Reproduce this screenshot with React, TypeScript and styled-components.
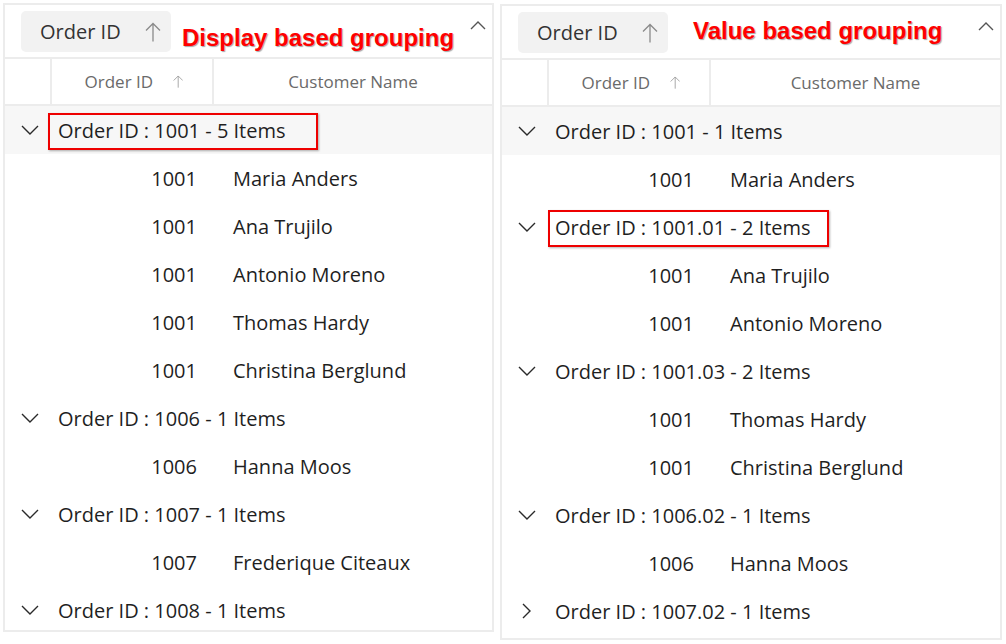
import React from "react";
import styled, { createGlobalStyle } from "styled-components";

const Global = createGlobalStyle`
  html, body { margin: 0; padding: 0; background: #ffffff; }
  body { font-family: "Open Sans", "Noto Sans", sans-serif; }
  * { box-sizing: border-box; }
`;

const Page = styled.div`
  width: 1006px;
  height: 644px;
  display: flex;
  align-items: flex-start;
  padding-left: 3px;
  gap: 6px;
  overflow: hidden;
`;

const Panel = styled.div<{ $w: number; $h: number; $top: number }>`
  width: ${(p) => p.$w}px;
  height: ${(p) => p.$h}px;
  margin-top: ${(p) => p.$top}px;
  border: 2px solid #ececec;
  display: flex;
  flex-direction: column;
  overflow: hidden;
  background: #fff;
`;

const GroupArea = styled.div`
  height: 52px;
  flex: none;
  display: flex;
  align-items: flex-start;
  padding: 6px 0 0 16px;
  position: relative;
`;

const Chip = styled.div`
  width: 150px;
  height: 41px;
  background: #f2f2f2;
  border-radius: 5px;
  display: flex;
  align-items: center;
  padding: 0 10px 0 19px;
  font-size: 20px;
  color: #333;
  justify-content: space-between;
  flex: none;
`;

const Title = styled.div<{ $dy: number; $dx: number }>`
  margin-left: ${(p) => p.$dx}px;
  margin-top: ${(p) => p.$dy}px;
  font-family: "Liberation Sans", Arial, sans-serif;
  font-weight: bold;
  font-size: 24px;
  color: #ff0000;
  text-shadow: 1px 1px 1px rgba(0, 0, 0, 0.35);
  white-space: nowrap;
`;

const CollapseBtn = styled.div`
  position: absolute;
  right: 6px;
  top: 8px;
  width: 16px;
  height: 10px;
`;

const HeaderRow = styled.div<{ $indent: number }>`
  display: grid;
  grid-template-columns: ${(p) => p.$indent}px 162px 1fr;
  height: 49px;
  border-top: 2px solid #ececec;
  border-bottom: 2px solid #ececec;
  flex: none;
`;

const HeaderCell = styled.div<{ $last?: boolean }>`
  border-right: ${(p) => (p.$last ? "none" : "2px solid #ececec")};
  display: flex;
  align-items: center;
  justify-content: center;
  gap: 20px;
  color: #6a6a6a;
  font-size: 17px;
  padding-left: ${(p) => (p.$last ? "0" : "4px")};
`;

const Row = styled.div<{ $indent: number }>`
  height: 48px;
  flex: none;
  display: grid;
  grid-template-columns: ${(p) => p.$indent}px 162px 1fr;
  align-items: center;
  font-size: 20px;
  color: #1f1f1f;
  background: #fff;
`;

const NumCell = styled.div`
  grid-column: 2;
  text-align: right;
  padding-right: 17px;
`;

const NameCell = styled.div`
  grid-column: 3;
  padding-left: 19px;
  white-space: nowrap;
`;

const GroupRow = styled.div<{ $shade?: boolean }>`
  height: 48px;
  flex: none;
  display: flex;
  align-items: center;
  font-size: 20px;
  color: #1f1f1f;
  background: ${(p) => (p.$shade ? "#f7f7f7" : "#fff")};
`;

const Toggle = styled.div`
  width: 53px;
  display: flex;
  justify-content: flex-start;
  padding-left: 16px;
  flex: none;
`;

const GroupLabel = styled.div`
  position: relative;
  white-space: nowrap;
`;

const Highlight = styled.div<{ $l: number; $r: number }>`
  position: absolute;
  left: ${(p) => p.$l}px;
  right: ${(p) => p.$r}px;
  top: -4px;
  bottom: -6px;
  border: 2px solid #ee0000;
  box-shadow: 1px 1px 2px rgba(0, 0, 0, 0.3);
`;

const UpArrow = ({ size, color }: { size: number; color: string }) => (
  <svg width={size * 0.8} height={size} viewBox="0 0 16 20" fill="none">
    <path d="M8 1.5V19.5M1 8.5L8 1.5L15 8.5" stroke={color} strokeWidth={1.3} />
  </svg>
);

const ChevronDown = () => (
  <svg width="18" height="10" viewBox="0 0 18 10" fill="none">
    <path d="M1 1L9 9L17 1" stroke="#2a2a2a" strokeWidth={1.4} />
  </svg>
);

const ChevronRight = () => (
  <svg width="18" height="18" viewBox="0 0 18 18" fill="none">
    <path d="M5 2L12 9L5 16" stroke="#2a2a2a" strokeWidth={1.4} />
  </svg>
);

const ChevronUp = () => (
  <svg width="16" height="10" viewBox="0 0 16 10" fill="none">
    <path d="M1 9L8 2L15 9" stroke="#555" strokeWidth={1.4} />
  </svg>
);

type Item =
  | { kind: "group"; label: string; collapsed?: boolean; shade?: boolean; hl?: [number, number] }
  | { kind: "row"; id: string; name: string };

const leftItems: Item[] = [
  { kind: "group", label: "Order ID : 1001 - 5 Items", shade: true, hl: [-10, -32] },
  { kind: "row", id: "1001", name: "Maria Anders" },
  { kind: "row", id: "1001", name: "Ana Trujilo" },
  { kind: "row", id: "1001", name: "Antonio Moreno" },
  { kind: "row", id: "1001", name: "Thomas Hardy" },
  { kind: "row", id: "1001", name: "Christina Berglund" },
  { kind: "group", label: "Order ID : 1006 - 1 Items" },
  { kind: "row", id: "1006", name: "Hanna Moos" },
  { kind: "group", label: "Order ID : 1007 - 1 Items" },
  { kind: "row", id: "1007", name: "Frederique Citeaux" },
  { kind: "group", label: "Order ID : 1008 - 1 Items" },
];

const rightItems: Item[] = [
  { kind: "group", label: "Order ID : 1001 - 1 Items", shade: true },
  { kind: "row", id: "1001", name: "Maria Anders" },
  { kind: "group", label: "Order ID : 1001.01 - 2 Items", hl: [-7, -18] },
  { kind: "row", id: "1001", name: "Ana Trujilo" },
  { kind: "row", id: "1001", name: "Antonio Moreno" },
  { kind: "group", label: "Order ID : 1001.03 - 2 Items" },
  { kind: "row", id: "1001", name: "Thomas Hardy" },
  { kind: "row", id: "1001", name: "Christina Berglund" },
  { kind: "group", label: "Order ID : 1006.02 - 1 Items" },
  { kind: "row", id: "1006", name: "Hanna Moos" },
  { kind: "group", label: "Order ID : 1007.02 - 1 Items", collapsed: true },
];

const Grid = ({
  title,
  items,
  w,
  h,
  top,
  titleDy,
  titleDx,
  indent,
}: {
  title: string;
  items: Item[];
  w: number;
  h: number;
  top: number;
  titleDy: number;
  titleDx: number;
  indent: number;
}) => (
  <Panel $w={w} $h={h} $top={top}>
    <GroupArea>
      <Chip>
        <span>Order ID</span>
        <UpArrow size={20} color="#8a8a8a" />
      </Chip>
      <Title $dy={titleDy} $dx={titleDx}>
        {title}
      </Title>
      <CollapseBtn>
        <ChevronUp />
      </CollapseBtn>
    </GroupArea>
    <HeaderRow $indent={indent}>
      <HeaderCell />
      <HeaderCell>
        <span>Order ID</span>
        <UpArrow size={13} color="#9a9a9a" />
      </HeaderCell>
      <HeaderCell $last>Customer Name</HeaderCell>
    </HeaderRow>
    {items.map((it, i) =>
      it.kind === "group" ? (
        <GroupRow key={i} $shade={it.shade}>
          <Toggle>{it.collapsed ? <ChevronRight /> : <ChevronDown />}</Toggle>
          <GroupLabel>
            {it.label}
            {it.hl && <Highlight $l={it.hl[0]} $r={it.hl[1]} />}
          </GroupLabel>
        </GroupRow>
      ) : (
        <Row key={i} $indent={indent}>
          <NumCell>{it.id}</NumCell>
          <NameCell>{it.name}</NameCell>
        </Row>
      )
    )}
  </Panel>
);

export default function App() {
  return (
    <>
      <Global />
      <Page>
        <Grid
          title="Display based grouping"
          items={leftItems}
          w={491}
          h={629}
          top={3}
          titleDy={13}
          titleDx={11}
          indent={47}
        />
        <Grid
          title="Value based grouping"
          items={rightItems}
          w={502}
          h={636}
          top={4}
          titleDy={5}
          titleDx={25}
          indent={47}
        />
      </Page>
    </>
  );
}
